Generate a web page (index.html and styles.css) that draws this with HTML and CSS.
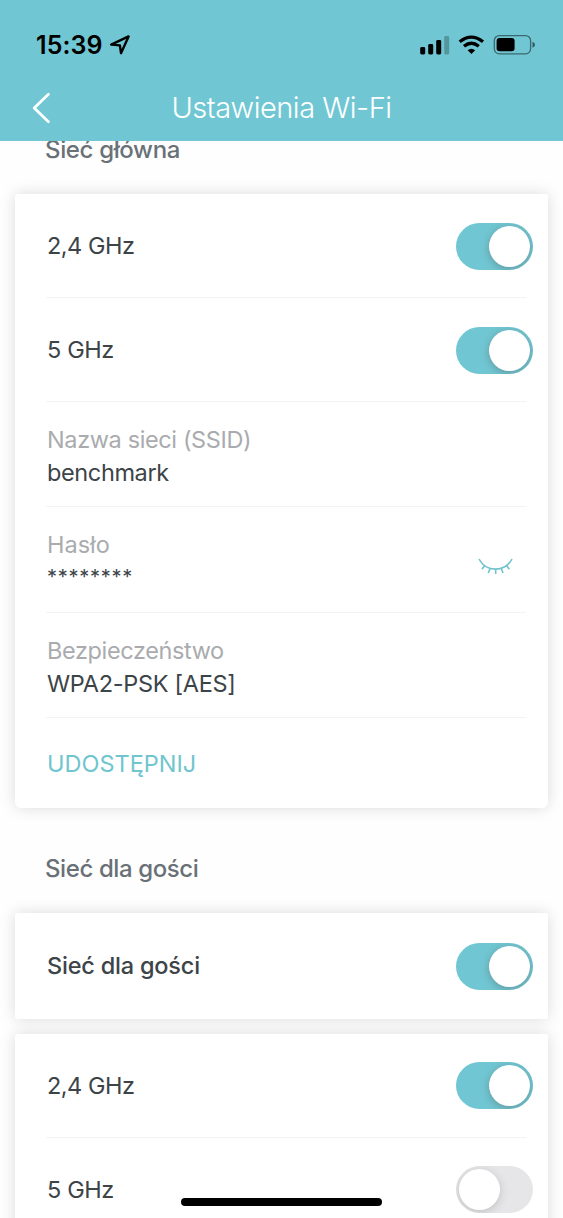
FILE: index.html
```html
<!DOCTYPE html>
<html lang="pl">
<head>
<meta charset="utf-8">
<title>Ustawienia Wi-Fi</title>
<link rel="stylesheet" href="styles.css">
</head>
<body>
<div class="screen">
  <header class="header">
    <div class="status">
      <span class="time">15:39</span>
      <svg class="location" width="22" height="22" viewBox="0 0 22 22"><path d="M2.2 10.6 L19.6 2.4 L12 19.2 L10.9 11.4 Z" fill="none" stroke="#000" stroke-width="2.4" stroke-linejoin="round"/></svg>
      <svg class="indicators" width="118" height="22" viewBox="0 0 118 22">
        <rect x="1.2" y="13" width="5" height="7.4" rx="1.4"/>
        <rect x="9.2" y="10" width="5" height="10.4" rx="1.4"/>
        <rect x="17.2" y="6" width="5" height="14.4" rx="1.4"/>
        <rect x="25.2" y="2" width="5" height="18.4" rx="1.4" opacity=".25"/>
        <g fill="none" stroke="#000" stroke-width="3.3">
          <path d="M40.7 7.8 Q52.3 -1.5 64 7.8"/>
          <path d="M45 12.3 Q52.4 6.2 59.8 12.3"/>
        </g>
        <path d="M48.6 16.2 Q52.4 13.2 56.2 16.2 L52.4 20 Z"/>
        <rect x="75.3" y="1.6" width="36.3" height="18.2" rx="5" fill="none" stroke="#000" stroke-width="1.3" opacity=".48"/>
        <rect x="77.6" y="4" width="18" height="13.3" rx="3"/>
        <path d="M113.5 7.8 Q116 8.8 116 10.8 Q116 12.8 113.5 13.8 Z" opacity=".55"/>
      </svg>
    </div>
    <div class="navbar">
      <svg class="back" width="20" height="34" viewBox="0 0 20 34"><path d="M16.4 3.2 L2.2 17 L16.4 30.8" fill="none" stroke="#fff" stroke-width="2.7" stroke-linecap="round" stroke-linejoin="round"/></svg>
      <h1 class="title">Ustawienia Wi-Fi</h1>
    </div>
  </header>
  <main class="content">
    <h2 class="section main-net">Sieć główna</h2>
    <section class="card primary">
      <div class="row"><span class="text ghz24">2,4 GHz</span><span class="toggle on"></span></div>
      <div class="row"><span class="text ghz5">5 GHz</span><span class="toggle on"></span></div>
      <div class="row field network">
        <span class="label ssid">Nazwa sieci (SSID)</span>
        <span class="value name">benchmark</span>
      </div>
      <div class="row field password">
        <span class="label haslo">Hasło</span>
        <span class="value stars">********</span>
        <svg class="eye" width="38" height="20" viewBox="0 0 38 20"><path d="M2 3 C9 16.5 28 16.5 35 3 M8 9 L5 13.3 M13.2 12.2 L11.2 17 M18.7 13.2 V18 M24.2 12.2 L26 17 M29.3 9 L32.3 13.3" fill="none" stroke="#70c3cd" stroke-width="1.6"/></svg>
      </div>
      <div class="row field security">
        <span class="label bezp">Bezpieczeństwo</span>
        <span class="value wpa">WPA2-PSK [AES]</span>
      </div>
      <div class="row action"><a class="share">UDOSTĘPNIJ</a></div>
    </section>
    <h2 class="section guest">Sieć dla gości</h2>
    <section class="card square single">
      <div class="row"><strong class="text guest-text">Sieć dla gości</strong><span class="toggle on"></span></div>
    </section>
    <section class="card square">
      <div class="row"><span class="text ghz24">2,4 GHz</span><span class="toggle on"></span></div>
      <div class="row"><span class="text ghz5">5 GHz</span><span class="toggle"></span></div>
    </section>
  </main>
  <div class="home-indicator"></div>
</div>
</body>
</html>
```
FILE: styles.css
```css
* { box-sizing: border-box; }
body { margin: 0; background: #fff; font-family: Inter, "Liberation Sans", sans-serif; color: #3c4448; }
.screen { position: relative; width: 563px; height: 1218px; overflow: hidden; background: #fefefe; display: flex; flex-direction: column; }
.header { position: relative; z-index: 1; flex: none; height: 141px; background: #70c7d3; }
.status { display: flex; align-items: center; padding: 34px 26px 0 36px; height: 56px; color: #000; }
.time { font-size: 25px; font-weight: 600; letter-spacing: .1px; line-height: 22px; }
.location { margin-left: 6px; }
.indicators { margin-left: auto; }
.navbar { display: flex; align-items: center; height: 68px; margin-top: 18px; padding-left: 32px; }
.back { flex: none; }
.title { margin: 0; width: 459px; text-align: center; color: #fff; font-size: 29px; font-weight: 300; line-height: 36px; letter-spacing: -.5px; }
.content { flex: none; margin-top: -7px; }
.section { margin: 0 0 0 45px; font-size: 24px; font-weight: 500; line-height: 32px; color: #697177; letter-spacing: -.4px; }
.main-net { letter-spacing: -.35px; }
.card { margin: 0 15px; background: #fff; box-shadow: 0 0 15px rgba(0,0,0,.14); border-radius: 2px 2px 6px 6px; }
.primary { margin-top: 28px; }
.guest { margin-top: 45px; }
.square { border-radius: 2px; margin-bottom: 15px; }
.single { margin-top: 28px; }
.single .row { height: 106px; }
.row { display: flex; align-items: center; justify-content: space-between; height: 104px; padding: 0 15px 1px 32px; background: linear-gradient(#f3f3f3, #f3f3f3) 31px 100% / 480px 1px no-repeat; }
.card .row:last-child { background: none; }
.field { display: grid; grid-template-columns: 1fr 38px; grid-template-rows: 33px 33px; align-content: start; height: 105px; padding: 21px 33px 0 32px; }
.password { height: 106px; }
.action { height: 90px; padding-bottom: 0; }
.text, .label, .value, .share { font-size: 23.5px; font-weight: 400; line-height: 33px; white-space: nowrap; letter-spacing: -.38px; }
.label, .value { grid-column: 1; }
.label { color: #a9abae; }
.text.ghz24 { letter-spacing: -.5px; }
.value.stars { font-size: 20px; letter-spacing: .72px; }
.label.haslo { letter-spacing: 0; }
.value.wpa { letter-spacing: -.3px; }
.share { color: #70c5cf; letter-spacing: 0; }
.text.guest-text { font-weight: 500; letter-spacing: -.2px; }
.eye { grid-column: 2; grid-row: 1 / 3; margin-top: 8px; align-self: start; margin-top: 28px; }
.toggle { display: flex; width: 77px; height: 47px; padding: 3px; border-radius: 24px; background: #e6e6e9; overflow: hidden; }
.toggle::before { content: ""; width: 41px; height: 41px; border-radius: 50%; background: #fff; box-shadow: 0 2px 8px rgba(80,80,80,.4); }
.primary .toggle, .single .toggle { margin-top: 1px; }
.on { background: #70c7d3; justify-content: flex-end; }
.toggle:not(.on)::before { box-shadow: 0 2px 8px rgba(80,80,80,.25); }
.home-indicator { position: absolute; left: 181px; bottom: 12px; width: 201px; height: 8px; border-radius: 4px; background: #000; }
```
